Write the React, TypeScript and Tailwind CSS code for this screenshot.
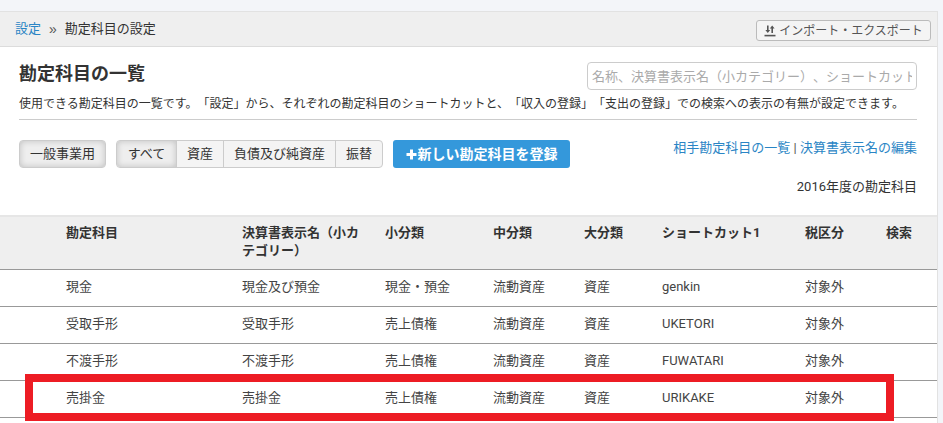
const font = '[font-family:Roboto,"Noto_Sans_CJK_JP",sans-serif] [text-spacing-trim:space-all]';

const columns = [
  { label: '勘定科目', width: 'w-[176px]' },
  { label: '決算書表示名\uFF08小カテゴリー\uFF09', width: 'w-[143px]' },
  { label: '小分類', width: 'w-[108px]' },
  { label: '中分類', width: 'w-[91px]' },
  { label: '大分類', width: 'w-[78px]' },
  { label: 'ショートカット1', width: 'w-[143px]' },
  { label: '税区分', width: 'w-[81px]' },
  { label: '検索', width: 'w-[52px]' },
];

const rows = [
  ['現金', '現金及び預金', '現金・預金', '流動資産', '資産', 'genkin', '対象外', ''],
  ['受取手形', '受取手形', '売上債権', '流動資産', '資産', 'UKETORI', '対象外', ''],
  ['不渡手形', '不渡手形', '売上債権', '流動資産', '資産', 'FUWATARI', '対象外', ''],
  ['売掛金', '売掛金', '売上債権', '流動資産', '資産', 'URIKAKE', '対象外', ''],
];

const tabs = [
  { label: '資産', width: 'w-[47px]' },
  { label: '負債及び純資産', width: 'w-[112px]' },
  { label: '振替', width: 'w-[47px]' },
];

const searchPlaceholder = '名称、決算書表示名\uFF08小カテゴリー\uFF09、ショートカット';

const ImportIcon = () => (
  <svg width="12" height="12" viewBox="0 0 12 12" className="text-[#555]">
    <path d="M3 0.5h1.6v4.5h1.6L3.8 8 1.4 5H3zM7.4 8V3.5H5.8L8.2 0.5l2.4 3H9V8z" fill="currentColor" />
    <rect x="0.5" y="9.8" width="11" height="1.6" fill="currentColor" />
  </svg>
);

const App = () => {
  return (
    <div className={`relative h-[423px] w-[943px] overflow-hidden bg-[#f3f5f9] pt-[11px] pr-[5px] text-[13px] text-[#333] ${font}`}>
      <div className="h-[412px] overflow-hidden border-t border-r border-[#e2e2e2] bg-white">
        <div className="flex h-[35px] items-center justify-between border-b border-[#dcdcdc] bg-[#efefef] pr-[6px] pl-[15px]">
          <div className="flex items-center text-[13px]">
            <span className="text-[#2a85c5]">設定</span>
            <span className="mr-[8px] ml-[8px] font-['Liberation_Sans'] text-[14px] text-[#555]">»</span>
            <span>勘定科目の設定</span>
          </div>
          <button className="mt-[3px] flex h-[21px] w-[175px] items-center justify-center gap-[3px] rounded-[3px] border border-[#bbb] bg-[#f4f4f4] text-[12px] text-[#555]">
            <ImportIcon />
            インポート・エクスポート
          </button>
        </div>

        <div className="pr-[20px] pl-[19px]">
          <div className="flex items-start justify-between pt-[15px]">
            <h1 className="text-[18px] leading-[24px] font-bold text-[#333]">勘定科目の一覧</h1>
            <input
              placeholder={searchPlaceholder}
              className="h-[28px] w-[330px] rounded-[4px] border border-[#ccc] bg-white px-[4px] text-[13px] placeholder:text-[#aaa]"
            />
          </div>
          <p className="mt-[4px] border-b border-[#ccc] pb-[5px] text-[12px] leading-[20px] whitespace-nowrap">
            使用できる勘定科目の一覧です。「設定」から、それぞれの勘定科目のショートカットと、「収入の登録」「支出の登録」での検索への表示の有無が設定できます。
          </p>

          <div className="mt-[20px] flex items-start justify-between">
            <div className="flex items-center">
              <button className="h-[28px] w-[87px] rounded-[4px] border border-[#ccc] bg-[#eee] text-[13px] shadow-[inset_0_0_6px_rgba(0,0,0,0.2)]">
                一般事業用
              </button>
              <div className="ml-[10px] flex h-[28px] overflow-hidden rounded-[4px] border border-[#ccc] bg-[#f4f4f4]">
                <span className="flex w-[59px] items-center justify-center bg-[#eee] shadow-[inset_0_0_6px_rgba(0,0,0,0.2)]">すべて</span>
                {tabs.map((tab) => (
                  <span key={tab.label} className={`flex ${tab.width} items-center justify-center border-l border-[#ccc]`}>
                    {tab.label}
                  </span>
                ))}
              </div>
              <button className="ml-[10px] flex h-[28px] w-[177px] items-center justify-center rounded-[3px] bg-[#3498db] text-[14px] font-bold text-white">
                <svg width="11" height="11" viewBox="0 0 11 11" className="mr-[1px]">
                  <path d="M4 0.5h3v3.5h3.5v3H7v3.5H4V7H0.5V4H4z" fill="currentColor" />
                </svg>
                新しい勘定科目を登録
              </button>
            </div>
            <div className="text-right">
              <div className="mt-[-1px] leading-[18px] text-[#2a85c5]">
                相手勘定科目の一覧 <span className="text-[#555]">|</span> 決算書表示名の編集
              </div>
              <div className="mt-[21px] leading-[18px]">2016年度の勘定科目</div>
            </div>
          </div>
        </div>

        <table className="mt-[19px] w-full table-fixed border-collapse border-t-2 border-[#e6e6e6]">
          <thead>
            <tr className="h-[53px] border-b border-[#999] bg-[#efefef] align-top">
              <th className="w-[66px] p-0" />
              {columns.map((col) => (
                <th key={col.label} className={`${col.width} p-0 pt-[7px] pr-[16px] text-left text-[13px] leading-[18px] font-bold`}>
                  {col.label}
                </th>
              ))}
            </tr>
          </thead>
          <tbody>
            {rows.map((row) => (
              <tr key={row[0]} className="h-[37px] border-b border-[#999]">
                <td className="p-0" />
                {row.map((cell, i) => (
                  <td key={i} className="p-0 pb-[2px] text-[13px] text-[#444]">
                    {cell}
                  </td>
                ))}
              </tr>
            ))}
          </tbody>
        </table>
      </div>

      {/* annotation drawn over the screenshot */}
      <div className="absolute top-[374px] left-[25px] h-[47px] w-[869px] border-[8px] border-[#ed1c24]" />
    </div>
  );
};

export default App;
